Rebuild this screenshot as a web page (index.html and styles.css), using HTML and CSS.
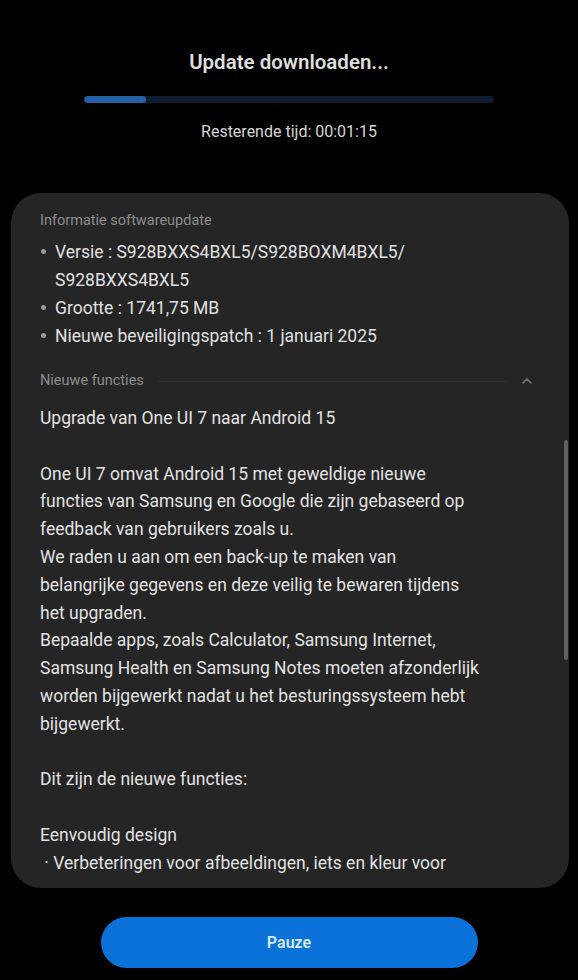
FILE: index.html
```html
<!DOCTYPE html>
<html lang="nl">
<head>
<meta charset="utf-8">
<title>Software-update</title>
<link rel="stylesheet" href="styles.css">
</head>
<body>
<div class="screen">
  <header class="top">
    <h1 class="title">Update downloaden...</h1>
    <div class="progress"><div class="progress-fill" style="width:15%"></div></div>
    <p class="remaining">Resterende tijd: 00:01:15</p>
  </header>

  <section class="card">
    <div class="card-scroll">
      <div class="label">Informatie softwareupdate</div>
      <ul class="facts">
        <li>Versie : S928BXXS4BXL5/S928BOXM4BXL5/<br>S928BXXS4BXL5</li>
        <li>Grootte : 1741,75 MB</li>
        <li>Nieuwe beveiligingspatch : 1 januari 2025</li>
      </ul>
      <div class="section-head">
        <span class="label">Nieuwe functies</span>
        <span class="rule"></span>
        <svg class="chev" viewBox="0 0 12 12" width="12" height="12"><path d="M2 8 L6 4 L10 8" fill="none" stroke="#777" stroke-width="1.6" stroke-linecap="round" stroke-linejoin="round"/></svg>
      </div>
      <div class="notes">
        <div>Upgrade van One UI 7 naar Android 15</div>
        <div class="blank"></div>
        <div>One UI 7 omvat Android 15 met geweldige nieuwe</div>
        <div>functies van Samsung en Google die zijn gebaseerd op</div>
        <div>feedback van gebruikers zoals u.</div>
        <div>We raden u aan om een back-up te maken van</div>
        <div>belangrijke gegevens en deze veilig te bewaren tijdens</div>
        <div>het upgraden.</div>
        <div>Bepaalde apps, zoals Calculator, Samsung Internet,</div>
        <div>Samsung Health en Samsung Notes moeten afzonderlijk</div>
        <div>worden bijgewerkt nadat u het besturingssysteem hebt</div>
        <div>bijgewerkt.</div>
        <div class="blank"></div>
        <div>Dit zijn de nieuwe functies:</div>
        <div class="blank"></div>
        <div>Eenvoudig design</div>
        <div>&nbsp;· Verbeteringen voor afbeeldingen, iets en kleur voor</div>
      </div>
    </div>
    <div class="scroll-thumb"></div>
  </section>

  <footer class="bottom">
    <button class="pause">Pauze</button>
  </footer>
</div>
</body>
</html>
```

FILE: styles.css
```css
* { box-sizing: border-box; }
html, body {
  margin: 0;
  padding: 0;
  background: #000;
}
body {
  font-family: Roboto, "Noto Sans", "Liberation Sans", sans-serif;
  color: #e4e4e4;
}
.screen {
  width: 578px;
  height: 980px;
  display: flex;
  flex-direction: column;
  overflow: hidden;
}
.top {
  display: flex;
  flex-direction: column;
  align-items: center;
  padding-top: 48px;
  height: 193px;
}
.title {
  margin: 0;
  font-size: 20.5px;
  line-height: 28px;
  font-weight: 600;
  color: #dedede;
}
.progress {
  margin-top: 20px;
  width: 410px;
  height: 7px;
  border-radius: 4px;
  background: #0d1c2e;
  overflow: hidden;
}
.progress-fill {
  height: 100%;
  background: #2260a8;
  border-radius: 4px;
}
.remaining {
  margin: 18px 0 0;
  font-size: 16px;
  line-height: 22px;
  color: #d6d6d6;
}
.card {
  position: relative;
  margin: 0 9px 0 11px;
  height: 695px;
  background: #252525;
  border-radius: 30px;
  overflow: hidden;
}
.card-scroll {
  padding: 18px 26px 0 29px;
}
.label {
  font-size: 14.5px;
  line-height: 20px;
  color: #8c8c8c;
}
.facts {
  list-style: none;
  margin: 7px 0 0;
  padding: 0;
}
.facts li {
  position: relative;
  padding-left: 15px;
  font-size: 17.5px;
  line-height: 28px;
  color: #e0e0e0;
}
.facts li::before {
  content: "";
  position: absolute;
  left: 1px;
  top: 11px;
  width: 5px;
  height: 5px;
  border-radius: 50%;
  background: #9a9a9a;
}
.section-head {
  display: flex;
  align-items: center;
  gap: 14px;
  margin-top: 21px;
  height: 20px;
}
.rule {
  flex: 1;
  height: 1px;
  background: #2e2e2e;
}
.chev { margin-right: 10px; }
.notes {
  margin-top: 14px;
  font-size: 17.5px;
  line-height: 27.8px;
  color: #e2e2e2;
  white-space: nowrap;
}
.blank { height: 27.8px; }
.scroll-thumb {
  position: absolute;
  right: 1px;
  top: 247px;
  width: 4px;
  height: 220px;
  border-radius: 2px;
  background: #606060;
}
.bottom {
  flex: 1;
  display: flex;
  justify-content: center;
  padding-top: 29px;
}
.pause {
  width: 377px;
  height: 51px;
  border: 0;
  border-radius: 26px;
  background: #0a72d8;
  color: #d8ebff;
  font-family: Roboto, "Noto Sans", "Liberation Sans", sans-serif;
  font-size: 16px;
  font-weight: 600;
}
```
